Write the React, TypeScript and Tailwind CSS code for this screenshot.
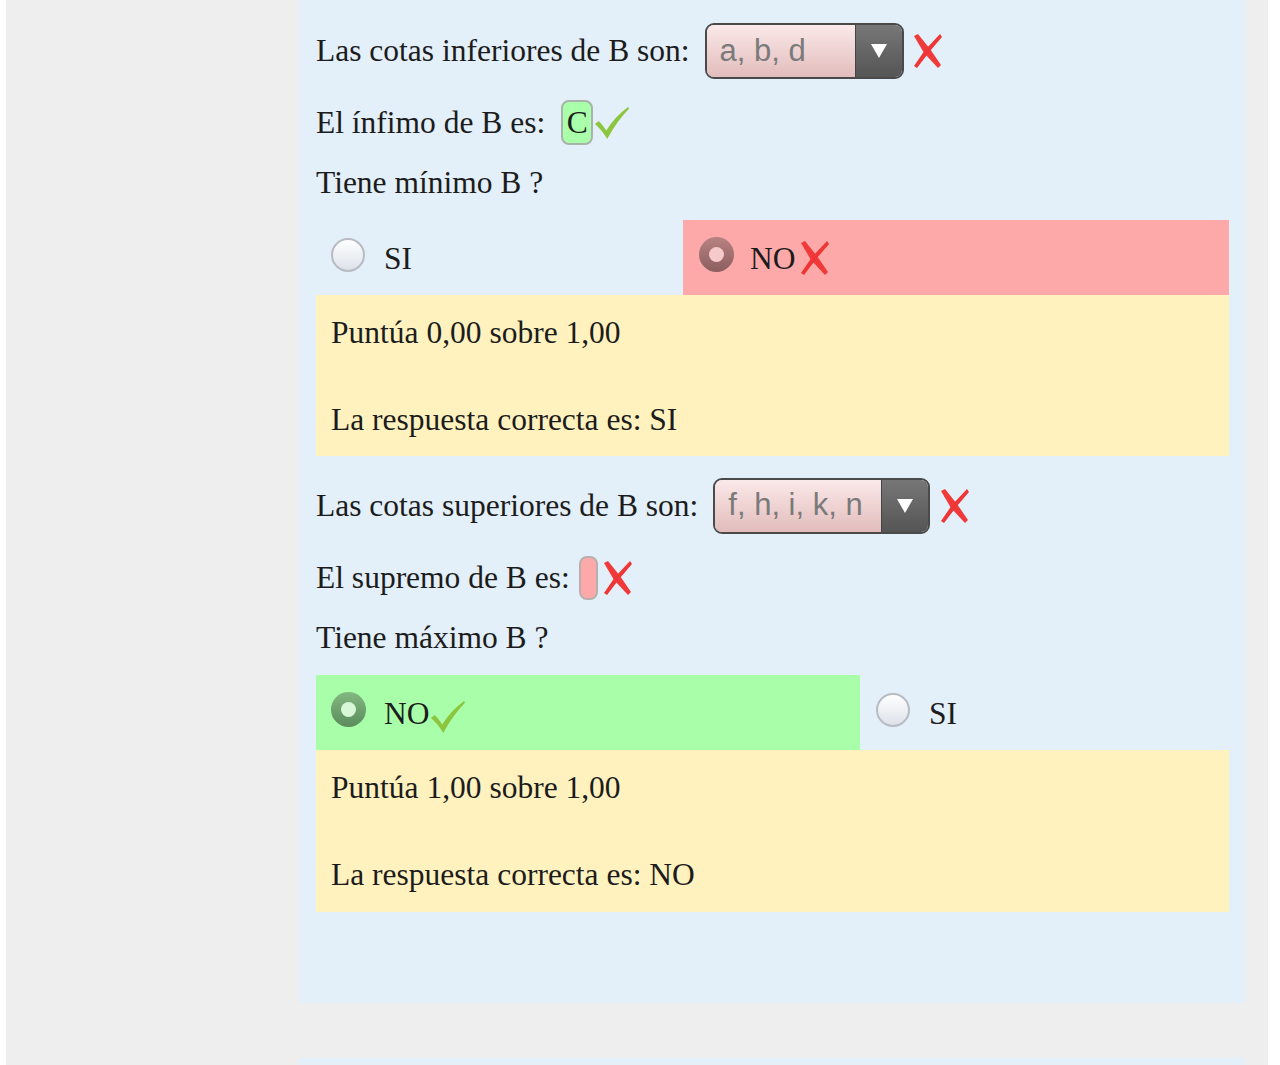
import React from "react";

const serif = { fontFamily: '"Liberation Serif", "Times New Roman", serif' };

function CrossMark({ className = "" }: { className?: string }) {
  return (
    <svg viewBox="0 0 32 36" className={className}>
      <path d="M3 3 L7 1 L19 16 L30 32 L27 35 L13 20 Z" fill="#f03a3a" />
      <path d="M29 1 L31 4 L19 18 L6 35 L3 33 L14 17 Z" fill="#ee3636" />
    </svg>
  );
}

function CheckMark({ className = "" }: { className?: string }) {
  return (
    <svg viewBox="0 0 38 38" className={className}>
      <path
        d="M1 20 L5 17 Q9 21 13 27 Q21 13 36 2 L37 4 Q24 17 14 36 Q9 27 1 20 Z"
        fill="#8cc63f"
      />
    </svg>
  );
}

function Radio({ checked, tone }: { checked?: boolean; tone?: "red" | "green" }) {
  if (!checked) {
    return (
      <span className="w-[34px] h-[34px] mb-[6px] rounded-full border-2 border-[#b8bcc2] bg-gradient-to-b from-[#ffffff] to-[#dde2ea] shrink-0" />
    );
  }
  const outer =
    tone === "red"
      ? "bg-gradient-to-b from-[#b88282] to-[#8c5e5e]"
      : "bg-gradient-to-b from-[#82b882] to-[#5c8c5c]";
  const inner = tone === "red" ? "bg-[#f6caca]" : "bg-[#d8f6d8]";
  return (
    <span
      className={`w-[35px] h-[35px] mb-[6px] rounded-full flex items-center justify-center shrink-0 ${outer}`}
    >
      <span className={`w-[15px] h-[15px] rounded-full ${inner}`} />
    </span>
  );
}

function Select({ value, width }: { value: string; width: string }) {
  return (
    <div
      className={`flex h-[56px] rounded-[9px] border-2 border-[#4a4a4a] overflow-hidden ${width}`}
    >
      <div
        className="flex-1 flex items-center pl-[13px] bg-gradient-to-b from-[#fbe9e9] to-[#e2bcbc] text-[#7a7a7a] text-[31px]"
        style={{ fontFamily: '"Liberation Sans", Arial, sans-serif' }}
      >
        {value}
      </div>
      <div className="w-[47px] flex items-center justify-center bg-gradient-to-b from-[#777777] to-[#555555] border-l border-[#444]">
        <svg viewBox="0 0 16 14" className="w-[16px] h-[14px]">
          <path d="M0 0 H16 L8 14 Z" fill="#ffffff" />
        </svg>
      </div>
    </div>
  );
}

export default function App() {
  return (
    <div className="h-[1065px] w-[1280px] bg-white overflow-hidden" style={serif}>
      <div className="ml-[6px] w-[1262px] h-full bg-[#eeeeee] pl-[293px] text-[31.5px] text-[#1c1c1c]">
        <div className="w-[946px] bg-[#e3eff9] pt-[23px] pb-[91px] pl-[17px] pr-[16px]">
          <div className="flex items-center h-[56px]">
            <span className="mr-[15px]">Las cotas inferiores de B son:</span>
            <Select value="a, b, d" width="w-[199px]" />
            <CrossMark className="w-[32px] h-[36px] ml-[7px]" />
          </div>

          <div className="flex items-center h-[45px] mt-[21px]">
            <span className="mr-[16px]">El ínfimo de B es:</span>
            <span className="h-[45px] w-[32px] rounded-[8px] border-2 border-[#a9b3a9] bg-[#aaffaa] flex items-center justify-center leading-none">
              C
            </span>
            <CheckMark className="w-[36px] h-[36px] ml-[1px]" />
          </div>

          <div className="flex items-center h-[36px] mt-[20px]">Tiene mínimo B ?</div>

          <div className="flex h-[75px] mt-[19px]">
            <div className="w-[367px] flex items-center pl-[15px]">
              <Radio />
              <span className="ml-[19px] mt-[3px]">SI</span>
            </div>
            <div className="flex-1 flex items-center pl-[16px] bg-[#fea9a9]">
              <Radio checked tone="red" />
              <span className="ml-[16px] mt-[3px]">NO</span>
              <CrossMark className="w-[32px] h-[36px] mt-[1px] ml-[2px]" />
            </div>
          </div>

          <div className="bg-[#fff2bf] h-[161px] pl-[15px] pt-[20px]">
            <div className="h-[36px] flex items-center">Puntúa 0,00 sobre 1,00</div>
            <div className="h-[36px] flex items-center mt-[51px]">La respuesta correcta es: SI</div>
          </div>

          <div className="flex items-center h-[55px] mt-[22px]">
            <span className="mr-[15px]">Las cotas superiores de B son:</span>
            <Select value="f, h, i, k, n" width="w-[217px]" />
            <CrossMark className="w-[32px] h-[36px] ml-[8px]" />
          </div>

          <div className="flex items-center h-[44px] mt-[23px]">
            <span className="mr-[9px]">El supremo de B es:</span>
            <span className="h-[44px] w-[19px] rounded-[8px] border-2 border-[#b8b0b0] bg-[#fea9a9]" />
            <CrossMark className="w-[32px] h-[36px] ml-[3px]" />
          </div>

          <div className="flex items-center h-[36px] mt-[20px]">Tiene máximo B ?</div>

          <div className="flex h-[75px] mt-[19px]">
            <div className="w-[544px] flex items-center pl-[15px] bg-[#a9fea9]">
              <Radio checked tone="green" />
              <span className="ml-[18px] mt-[3px]">NO</span>
              <CheckMark className="w-[36px] h-[38px] mt-[8px]" />
            </div>
            <div className="flex-1 flex items-center pl-[16px]">
              <Radio />
              <span className="ml-[19px] mt-[3px]">SI</span>
            </div>
          </div>

          <div className="bg-[#fff2bf] h-[162px] pl-[15px] pt-[20px]">
            <div className="h-[36px] flex items-center">Puntúa 1,00 sobre 1,00</div>
            <div className="h-[36px] flex items-center mt-[51px]">La respuesta correcta es: NO</div>
          </div>
        </div>
        <div className="w-[946px] h-[60px] mt-[55px] bg-[#e3eff9]" />
      </div>
    </div>
  );
}
